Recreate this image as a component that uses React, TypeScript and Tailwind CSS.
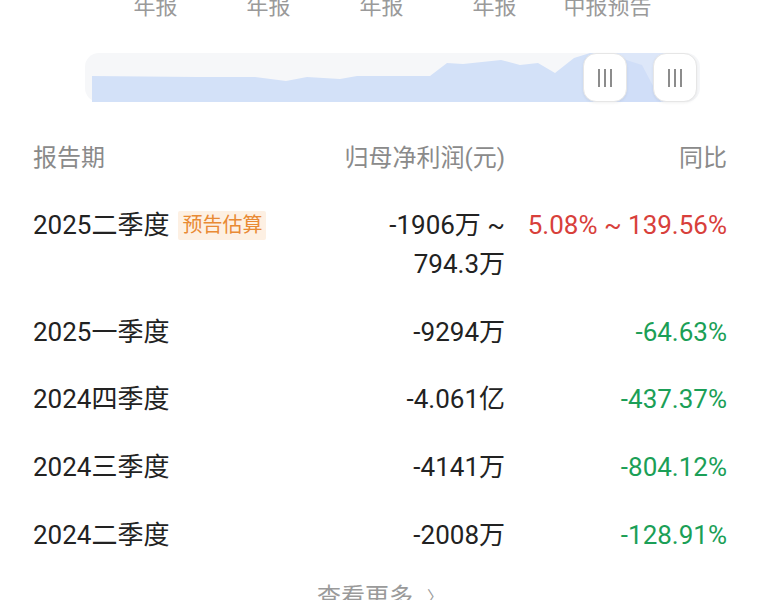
const AXIS = ['年报', '年报', '年报', '年报', '中报预告']

type Row = {
  period: string
  tag?: string
  value: string[]
  yoy: string
  up: boolean
}

const ROWS: Row[] = [
  { period: '2025二季度', tag: '预告估算', value: ['-1906万 ~', '794.3万'], yoy: '5.08% ~ 139.56%', up: true },
  { period: '2025一季度', value: ['-9294万'], yoy: '-64.63%', up: false },
  { period: '2024四季度', value: ['-4.061亿'], yoy: '-437.37%', up: false },
  { period: '2024三季度', value: ['-4141万'], yoy: '-804.12%', up: false },
  { period: '2024二季度', value: ['-2008万'], yoy: '-128.91%', up: false },
]

const AREA =
  'M7,49 L7,23 L112,24 L170,24 L201,28 L222,24 L255,26 L272,23 L345,23 L362,10 L378,11 L416,7 L435,12 L453,10 L470,20 L489,5 L505,0 L515,1 L535,5 L557,12 L576,48 L576,49 Z'

function Handle({ left }: { left: string }) {
  return (
    <div
      className={`absolute top-0 ${left} w-[44px] h-[49px] rounded-[13px] bg-white border border-[#e6e6e6] shadow-[0_1px_3px_rgba(0,0,0,0.06)] flex items-center justify-center gap-[4px]`}
    >
      <span className="w-[2px] h-[18px] bg-[#8c8c8c]" />
      <span className="w-[2px] h-[18px] bg-[#8c8c8c]" />
      <span className="w-[2px] h-[18px] bg-[#8c8c8c]" />
    </div>
  )
}

export default function App() {
  return (
    <div
      className="w-[760px] h-[600px] overflow-hidden bg-white"
      style={{ fontFamily: 'Roboto, "Noto Sans CJK SC", sans-serif' }}
    >
      {/* axis labels of the chart above (cut off) */}
      <div className="flex -mt-[7px] pl-[99px] text-[22px] leading-[28px] text-[#9a9a9a]">
        {AXIS.map((label, i) => (
          <div key={i} className="w-[113px] text-center whitespace-nowrap">
            {label}
          </div>
        ))}
      </div>

      {/* range slider */}
      <div className="ml-[85px] mt-[32px] w-[615px] h-[49px] relative rounded-[14px] bg-[#f6f7f9]">
        <svg width="615" height="49" viewBox="0 0 615 49" className="absolute inset-0">
          <rect x="520" y="0" width="71" height="49" fill="#e5ecfa" />
          <path d={AREA} fill="#d3e1f8" />
          <path d="M520,0 L591,0 L591,49 L520,49 Z" fill="#c6d8f6" opacity="0.25" />
        </svg>
        <Handle left="left-[498px]" />
        <Handle left="left-[568px]" />
      </div>

      {/* table */}
      <div className="px-[33px] mt-[22px]">
        <div className="grid grid-cols-[1fr_180px_222px] py-[14.5px] leading-[39px] text-[24px] text-[#8a8a8a]">
          <div>报告期</div>
          <div className="text-right whitespace-nowrap">归母净利润(元)</div>
          <div className="text-right">同比</div>
        </div>

        {ROWS.map((row, i) => (
          <div
            key={i}
            className="grid grid-cols-[1fr_180px_222px] py-[14.3px] leading-[39px] text-[26px] text-[#222222]"
          >
            <div className="flex items-start">
              <span>{row.period}</span>
              {row.tag && (
                <span className="ml-[9px] mt-[5px] px-[4px] h-[29px] leading-[29px] text-[20px] text-[#e98a34] bg-[#fdf0e3] rounded-[2px]">
                  {row.tag}
                </span>
              )}
            </div>
            <div className="text-right">
              {row.value.map((v, j) => (
                <div key={j} className="whitespace-nowrap">
                  {v}
                </div>
              ))}
            </div>
            <div className={`text-right whitespace-nowrap ${row.up ? 'text-[#d8403b]' : 'text-[#1b9f57]'}`}>
              {row.yoy}
            </div>
          </div>
        ))}

        <div className="flex justify-center items-center gap-[14px] mt-[13px] text-[24px] leading-[30px] text-[#9a9a9a]">
          <span>查看更多</span>
          <span className="text-[16px]">〉</span>
        </div>
      </div>
    </div>
  )
}
